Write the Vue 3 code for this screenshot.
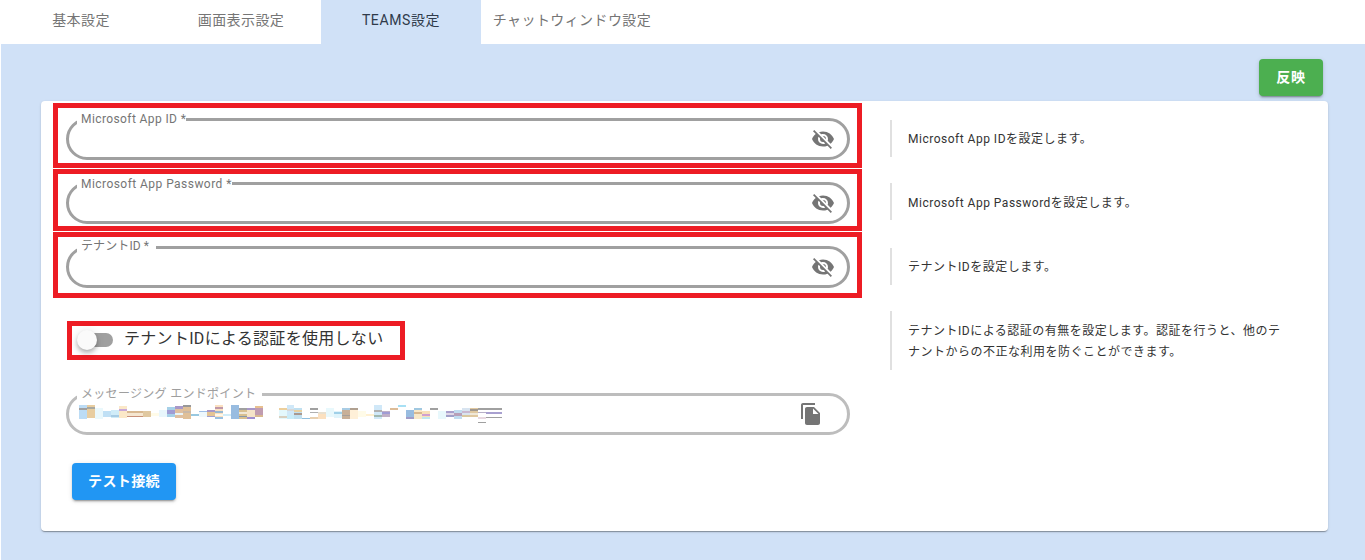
<script setup>
const tabs = [
  { label: '基本設定' },
  { label: '画面表示設定' },
  { label: 'TEAMS設定', active: true },
  { label: 'チャットウィンドウ設定', wide: true }
]

const secretFields = [
  { label: 'Microsoft App ID *', note: 'Microsoft App IDを設定します。', box: 'box-a', noteClass: 'note-a', labelClass: 'label-a' },
  { label: 'Microsoft App Password *', note: 'Microsoft App Passwordを設定します。', box: 'box-b', noteClass: 'note-b', labelClass: 'label-b' },
  { label: 'テナントID *', note: 'テナントIDを設定します。', box: 'box-c', noteClass: 'note-c', labelClass: 'label-c' }
]

// Mosaic that masks the endpoint URL: [x, width, y, height, colour]
const mosaic = [
  [79,8,407,14,'#bcdcf5'],[79,8,410,2,'#a0a0a0'],
  [87,8,407,13,'#e8cda0'],[87,8,409,2,'#a8a8a0'],
  [95,8,410,11,'#eaf8fc'],[103,8,413,6,'#c0e0f5'],
  [111,8,412,8,'#d0ecf8'],[111,8,417,2,'#a8cce4'],
  [119,8,408,12,'#fbe8c8'],[119,8,411,2,'#c8a8d8'],
  [127,16,413,2,'#d8b890'],[127,16,415,3,'#f5e6d0'],[127,16,418,1,'#c89078'],
  [143,8,413,6,'#e0c8a0'],[151,8,415,3,'#fffbe8'],[159,8,412,7,'#e8f6fc'],
  [167,8,409,10,'#a6d0e8'],[167,8,412,4,'#a09cd4'],
  [175,8,408,12,'#e0c0a0'],[175,8,408,3,'#a898c8'],[175,8,415,2,'#e8f4f8'],
  [183,8,407,14,'#e0c098'],[183,8,407,2,'#989898'],[183,8,413,2,'#c8b8a8'],
  [191,8,416,2,'#98c8e0'],
  [199,8,413,6,'#eef8fc'],[199,8,413,1,'#a0c0e8'],
  [207,8,412,7,'#e4c494'],[207,8,412,2,'#a898c8'],[207,8,418,1,'#a0a0d0'],
  [215,8,407,14,'#fbe0c0'],[215,8,409,2,'#c098a8'],[215,8,413,2,'#98b8d0'],[215,8,416,2,'#fff8e8'],[215,8,419,2,'#98c0e0'],
  [223,8,416,2,'#d0ecf8'],
  [231,8,407,14,'#98bce0'],
  [239,8,410,11,'#d8c090'],[239,8,410,2,'#a0a0a0'],[239,8,414,2,'#f0e8d8'],[239,8,418,1,'#8898a8'],
  [247,8,410,11,'#f5e4c8'],[247,8,410,2,'#a898c8'],[247,8,419,2,'#a090d0'],
  [255,8,408,11,'#c09cb0'],[255,8,408,2,'#e8c090'],[255,8,417,2,'#d8b890'],
  [279,8,410,11,'#e4f8fc'],[279,8,410,2,'#eccf9c'],[279,8,418,2,'#d8d0c0'],
  [287,7,407,14,'#d0e8f8'],[287,7,411,2,'#d8d8d8'],[287,7,417,4,'#c8ecf8'],
  [294,8,410,11,'#c0e0f0'],[294,8,412,2,'#e8d0a0'],[294,8,415,2,'#a89890'],
  [302,8,420,1,'#90c0e0'],
  [310,8,410,2,'#a0a0a0'],[310,8,414,1,'#b0b0b0'],[310,8,419,2,'#e8d0b0'],
  [318,8,414,7,'#fbe0c0'],[318,8,414,2,'#e8e0d0'],
  [326,8,410,9,'#e8f8fc'],[334,8,413,7,'#e0f4fb'],[334,8,414,2,'#a0d0e8'],
  [342,8,410,11,'#c8b098'],[342,8,410,2,'#a8cce4'],[342,8,417,1,'#a8a098'],
  [350,8,410,11,'#fff0d8'],[350,8,410,2,'#b0a090'],
  [358,8,413,6,'#fffbe8'],[366,8,416,2,'#fff0d0'],
  [374,8,407,14,'#d0e8f8'],[374,8,412,2,'#b0b0b0'],[374,8,417,2,'#a0b8b0'],
  [382,8,413,6,'#c0b0c8'],[382,8,414,2,'#a09cd4'],
  [390,8,410,2,'#dcbc98'],[398,8,407,2,'#a8e0f4'],
  [406,8,412,9,'#98bce0'],[406,8,419,2,'#a09cc8'],
  [414,8,410,11,'#f8e8c8'],[414,8,410,2,'#a0c8e0'],[414,8,414,2,'#d8b890'],
  [422,8,413,8,'#f8e0b8'],[422,8,416,2,'#d0a0d0'],[422,8,419,2,'#c0e8f0'],
  [430,8,410,2,'#a0a0a0'],[438,8,413,8,'#e8f8fc'],
  [446,8,413,6,'#e0d8e8'],[446,8,413,2,'#a8a0cc'],[446,8,417,2,'#a0a0c8'],
  [454,8,412,9,'#c0dcf0'],[454,8,415,3,'#b8a0b8'],
  [462,8,410,9,'#d8e4f0'],[462,8,413,2,'#c8b8d0'],[462,8,417,2,'#d8c8a0'],
  [470,8,410,9,'#e0c8a0'],[470,8,411,2,'#a09890'],[470,8,415,2,'#f0e8d8'],
  [478,8,410,2,'#a0a0a0'],[478,8,414,1,'#b8b0c8'],[478,8,419,2,'#e8d8e0'],[478,8,424,1,'#a0a0a0'],
  [486,16,410,2,'#a0a0a0'],[486,16,414,2,'#a8a0d0'],[486,16,419,1,'#a0a0a0']
]
</script>

<template>
  <div class="page">
    <nav class="tabs">
      <div
        v-for="tab in tabs"
        :key="tab.label"
        class="tab"
        :class="{ active: tab.active, wide: tab.wide }"
      >{{ tab.label }}</div>
    </nav>

    <main class="content">
      <div class="actions">
        <button class="btn btn-green" type="button">反映</button>
      </div>

      <section class="card">
        <template v-for="field in secretFields" :key="field.label">
          <div class="box" :class="field.box">
            <div class="pill">
              <span class="pill-label" :class="field.labelClass">{{ field.label }}</span>
              <span class="pill-value"></span>
              <svg class="icon" viewBox="0 0 24 24" width="24" height="24" aria-hidden="true">
                <path d="M11.83,9L15,12.16C15,12.11 15,12.05 15,12A3,3 0 0,0 12,9C11.94,9 11.89,9 11.83,9M7.53,9.8L9.08,11.35C9.03,11.56 9,11.77 9,12A3,3 0 0,0 12,15C12.22,15 12.44,14.97 12.65,14.92L14.2,16.47C13.53,16.8 12.79,17 12,17A5,5 0 0,1 7,12C7,11.21 7.2,10.47 7.53,9.8M2,4.27L4.28,6.55L4.73,7C3.08,8.3 1.78,10 1,12C2.73,16.39 7,19.5 12,19.5C13.55,19.5 15.03,19.2 16.38,18.66L16.81,19.08L19.73,22L21,20.73L3.27,3M12,7A5,5 0 0,1 17,12C17,12.64 16.87,13.26 16.64,13.82L19.57,16.75C21.07,15.5 22.27,13.86 23,12C21.27,7.61 17,4.5 12,4.5C10.6,4.5 9.26,4.75 8,5.2L10.17,7.35C10.74,7.13 11.35,7 12,7Z" />
              </svg>
            </div>
          </div>
          <p class="note" :class="field.noteClass">{{ field.note }}</p>
        </template>

        <div class="switch-cell">
          <div class="switch-box">
            <span class="switch">
              <span class="switch-track"></span>
              <span class="switch-thumb"></span>
            </span>
            <span class="switch-label">テナントIDによる認証を使用しない</span>
          </div>
        </div>
        <p class="note note-d">テナントIDによる認証の有無を設定します。認証を行うと、他のテナントからの不正な利用を防ぐことができます。</p>

        <div class="endpoint-cell">
          <div class="pill pill-muted">
            <span class="pill-label label-d">メッセージング エンドポイント</span>
            <svg class="mosaic" viewBox="78 404 426 24" width="426" height="24" aria-hidden="true">
              <rect
                v-for="(r, i) in mosaic"
                :key="i"
                :x="r[0]" :width="r[1]" :y="r[2]" :height="r[3]" :fill="r[4]"
              />
            </svg>
            <svg class="icon" viewBox="0 0 24 24" width="24" height="24" aria-hidden="true">
              <path fill-rule="evenodd" d="M16 1H4c-1.1 0-2 .9-2 2v14h2V3h12V1zm-1 4l6 6v10c0 1.1-.9 2-2 2H7.99C6.89 23 6 22.1 6 21l.01-14c0-1.1.89-2 1.99-2h7zm-1 7h5.5L14 6.5V12z" />
            </svg>
          </div>
        </div>

        <div class="test-cell">
          <button class="btn btn-blue" type="button">テスト接続</button>
        </div>
      </section>
    </main>
  </div>
</template>

<style>
html, body { margin: 0; background: #fff; }
</style>

<style scoped>
.page {
  min-height: 560px;
  padding-left: 1px;
  display: flex;
  flex-direction: column;
  box-sizing: border-box;
  font-family: Roboto, "Noto Sans CJK JP", sans-serif;
  color: #333;
}

.tabs { display: flex; height: 44px; background: #fff; }
.tab {
  width: 160px;
  box-sizing: border-box;
  padding-bottom: 6px;
  display: flex;
  align-items: center;
  justify-content: center;
  font-size: 14px;
  letter-spacing: 0.4px;
  color: #757575;
}
.tab.wide { width: 182px; }
.tab.active { background: #d0e1f7; color: #2f3a4a; letter-spacing: 0.6px; }

.content { flex: 1; background: #d0e1f7; padding: 15px 37px 29px 40px; }
.actions { display: flex; justify-content: flex-end; padding-right: 5px; margin-bottom: 5px; }

.btn {
  height: 37px;
  border: 0;
  border-radius: 4px;
  padding: 0 0 4px;
  color: #fff;
  font: 700 14px Roboto, "Noto Sans CJK JP", sans-serif;
  letter-spacing: 0.8px;
  box-shadow: 0 3px 1px -2px rgba(0,0,0,.2), 0 2px 2px rgba(0,0,0,.14), 0 1px 5px rgba(0,0,0,.12);
}
.btn-green { width: 64px; background: #4caf50; }
.btn-blue { width: 104px; background: #2196f3; letter-spacing: 0.4px; }

.card {
  height: 430px;
  box-sizing: border-box;
  padding: 2px 0 0 12px;
  background: #fff;
  border-radius: 4px;
  box-shadow: 0 2px 1px -1px rgba(0,0,0,.2), 0 1px 1px rgba(0,0,0,.14), 0 1px 3px rgba(0,0,0,.12);
  display: grid;
  grid-template-columns: 809px 396px;
  grid-template-rows: auto auto auto auto auto 1fr;
  column-gap: 28px;
  align-items: start;
}

.box {
  box-sizing: border-box;
  border: 5px solid #ed1c24;
  padding-left: 8px;
  padding-right: 0;
  margin-bottom: 1px;
}
.box-a { padding-top: 10px; padding-bottom: 3px; }
.box-b { padding-top: 8px; padding-bottom: 2px; }
.box-c { padding-top: 9px; padding-bottom: 5px; margin-bottom: 0; }

.pill {
  position: relative;
  width: 784px;
  height: 42px;
  box-sizing: border-box;
  border: 3px solid #a0a0a0;
  border-radius: 21px;
  display: flex;
  align-items: center;
  justify-content: space-between;
  padding: 0 12px 0 9px;
}
.pill-muted { border-color: #bdbdbd; padding-right: 24px; }

.pill-label {
  position: absolute;
  left: 8px;
  top: -10px;
  padding: 0 7px 0 4px;
  background: #fff;
  font-size: 12px;
  line-height: 14px;
  letter-spacing: 0.4px;
  color: #757575;
  white-space: nowrap;
}
.label-a { top: -9px; padding-right: 0; }
.label-b { top: -8px; padding-right: 0; letter-spacing: 0.45px; }
.label-c { letter-spacing: 0.1px; }
.label-d { top: -9px; color: #9e9e9e; letter-spacing: 0.3px; padding-right: 6px; }

.icon { flex: none; margin-left: auto; fill: #757575; }
.mosaic { flex: none; }

.note {
  margin: 0;
  box-sizing: border-box;
  border-left: 2px solid #e0e0e0;
  padding-left: 16px;
  display: flex;
  align-items: center;
  font-size: 12px;
  line-height: 21px;
  letter-spacing: 0.5px;
  color: #333;
}
.note-a { margin-top: 17px; height: 37px; padding-top: 2px; }
.note-b { margin-top: 14px; height: 37px; padding-top: 4px; }
.note-c { margin-top: 16px; height: 37px; padding-top: 2px; }
.note-d { margin-top: 13px; height: 59px; padding-top: 3px; }

.switch-cell { padding: 23px 0 0 14px; }
.switch-box {
  width: 338px;
  height: 39px;
  box-sizing: border-box;
  border: 5px solid #ed1c24;
  display: flex;
  align-items: center;
  padding-left: 5px;
  gap: 11px;
}
.switch { position: relative; width: 36px; height: 20px; flex: none; top: -1px; }
.switch-track {
  position: absolute;
  left: 2px;
  top: 3px;
  width: 34px;
  height: 14px;
  border-radius: 7px;
  background: #a0a0a0;
}
.switch-thumb {
  position: absolute;
  left: 0;
  top: 0;
  width: 20px;
  height: 20px;
  border-radius: 50%;
  background: #fafafa;
  box-shadow: 0 2px 4px -1px rgba(0,0,0,.2), 0 4px 5px rgba(0,0,0,.14), 0 1px 10px rgba(0,0,0,.12);
}
.switch-label { font-size: 16px; line-height: 24px; letter-spacing: 0.3px; color: #333; white-space: nowrap; padding-bottom: 4px; }

.endpoint-cell { grid-column: 1; padding: 23px 0 0 13px; }
.test-cell { grid-column: 1; padding: 28px 0 0 19px; }
</style>
